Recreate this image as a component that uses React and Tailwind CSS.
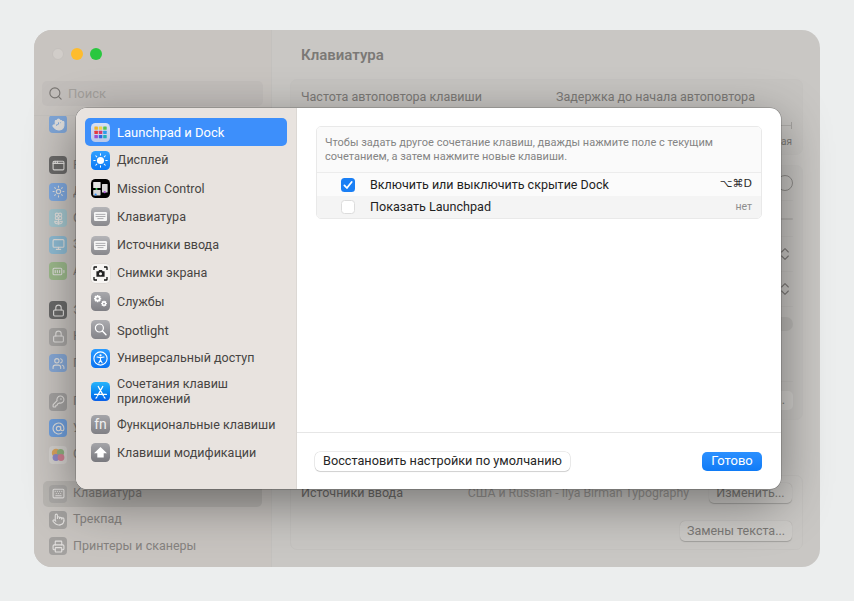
import { Search, ChevronsUpDown, Hand, Lock, Users, KeyRound, Keyboard, Printer, AppWindow, Sun, Flower2, Monitor, BatteryFull, AtSign, Pointer } from "lucide-react";

const font = { fontFamily: "Roboto, 'Noto Sans', sans-serif" };

function Tile({ className = "", children }) {
  return (
    <div className={`w-[19px] h-[19px] rounded-[4.5px] shrink-0 flex items-center justify-center overflow-hidden ${className}`}>
      <svg viewBox="0 0 19 19" className="w-[19px] h-[19px]">{children}</svg>
    </div>
  );
}

const IconGrid = () => {
  const cols = ["#f0b429", "#f5d24a", "#58c44f", "#e5393b", "#d63c6c", "#2f9be8", "#9a4fd0", "#3167e0", "#21b0b8"];
  return (
    <Tile className="bg-gradient-to-b from-[#d9e1f2] to-[#b9c8ea]">
      {cols.map((c, i) => (
        <rect key={i} x={3.4 + (i % 3) * 4.4} y={3.6 + Math.floor(i / 3) * 4.2} width="3.5" height="3.2" rx="0.5" fill={c} />
      ))}
    </Tile>
  );
};

const sunRays = [0, 45, 90, 135, 180, 225, 270, 315];

const IconSun = () => (
  <Tile className="bg-gradient-to-b from-[#30a0ff] to-[#0a78f5]">
    <circle cx="9.5" cy="9.5" r="3.6" fill="#fff" />
    {sunRays.map((a) => (
      <rect key={a} x="9" y="2.4" width="1" height="2.2" fill="#fff" transform={`rotate(${a} 9.5 9.5)`} />
    ))}
  </Tile>
);

const IconMission = () => (
  <Tile className="bg-black">
    <rect x="2.2" y="3" width="7.4" height="6" rx="0.6" fill="#e4e4e4" />
    <rect x="2.2" y="11" width="7.4" height="5.4" rx="0.6" fill="#d5d5d5" />
    <rect x="11" y="5" width="5.6" height="8.6" rx="0.6" fill="#d8d8d8" />
    <circle cx="5.5" cy="10" r="1.1" fill="#3ecb58" />
    <circle cx="4.6" cy="15.6" r="1.1" fill="#2e8cf5" />
    <circle cx="13.7" cy="13.2" r="1.1" fill="#b05ad8" />
  </Tile>
);

const IconKeys = () => (
  <Tile className="bg-gradient-to-b from-[#b5b5b8] to-[#88888c]">
    <rect x="3" y="5" width="13" height="9" rx="1.2" fill="#f4f4f4" />
    <path d="M4.6 7.4h9.8M4.6 9.5h9.8M6.5 11.6h6" stroke="#a5a5a8" strokeWidth="0.9" />
  </Tile>
);

const IconShot = () => (
  <Tile className="bg-[#f7f5f3] shadow-[0_0_0_0.5px_#d8d4d0]">
    <path d="M3 6V3.6a.6.6 0 0 1 .6-.6H6M13 3h2.4a.6.6 0 0 1 .6.6V6M16 13v2.4a.6.6 0 0 1-.6.6H13M6 16H3.6a.6.6 0 0 1-.6-.6V13" fill="none" stroke="#111" strokeWidth="1.3" />
    <path d="M5.4 7.2h1.9l.8-1.1h2.8l.8 1.1h1.9v5.6H5.4z" fill="#222" />
    <circle cx="9.5" cy="9.8" r="1.5" fill="#f7f5f3" />
  </Tile>
);

const Gear = ({ x, y, r }) => (
  <g>
    {[0, 45, 90, 135].map((a) => (
      <rect key={a} x={x - r * 0.28} y={y - r * 1.25} width={r * 0.56} height={r * 2.5} fill="#fff" transform={`rotate(${a} ${x} ${y})`} />
    ))}
    <circle cx={x} cy={y} r={r} fill="#fff" />
    <circle cx={x} cy={y} r={r * 0.42} fill="#98989c" />
  </g>
);

const IconGears = () => (
  <Tile className="bg-gradient-to-b from-[#a8a8ac] to-[#7f7f84]">
    <Gear x={6.6} y={6.6} r={2.9} />
    <Gear x={13} y={11.6} r={2.3} />
  </Tile>
);

const IconSpot = () => (
  <Tile className="bg-gradient-to-b from-[#acacb0] to-[#838388]">
    <circle cx="8.4" cy="8" r="4" fill="none" stroke="#fff" strokeWidth="1.2" />
    <path d="M11.4 11l3.6 3.8" stroke="#fff" strokeWidth="1.4" strokeLinecap="round" />
  </Tile>
);

const IconAccess = () => (
  <Tile className="bg-gradient-to-b from-[#2a9bff] to-[#0a72f0]">
    <circle cx="9.5" cy="9.5" r="6.6" fill="none" stroke="#fff" strokeWidth="1.1" />
    <circle cx="9.5" cy="6.3" r="1.1" fill="#fff" />
    <path d="M6 8l3.5.6L13 8M9.5 8.6v2.4M9.5 11l-1.7 3M9.5 11l1.7 3" fill="none" stroke="#fff" strokeWidth="1.1" strokeLinecap="round" />
  </Tile>
);

const IconStore = () => (
  <Tile className="bg-gradient-to-b from-[#28b4fb] to-[#0b5fe8]">
    <path d="M7.2 4.4l5.2 9.2M11.8 4.4l-5.2 9.2M3.6 12.4h11.8M13 14.8l1 1.4M6 14.8l-1 1.4" fill="none" stroke="#fff" strokeWidth="1.2" strokeLinecap="round" />
  </Tile>
);

const IconFn = () => (
  <div className="w-[19px] h-[19px] rounded-[4.5px] shrink-0 flex items-center justify-center bg-gradient-to-b from-[#a5a5a9] to-[#808085] text-[#efefef] text-[14px] leading-none pb-px">
    fn
  </div>
);

const IconArrow = () => (
  <Tile className="bg-gradient-to-b from-[#a5a5a9] to-[#79797e]">
    <path d="M9.5 4L16 10.2h-3.3v4.2H6.3v-4.2H3z" fill="#fff" />
  </Tile>
);

const menu = [
  { label: "Дисплей", icon: <IconSun />, size: "text-[12.5px]" },
  { label: "Mission Control", icon: <IconMission />, size: "text-[12.5px]" },
  { label: "Клавиатура", icon: <IconKeys />, size: "text-[12.5px]" },
  { label: "Источники ввода", icon: <IconKeys />, size: "text-[12.5px]" },
  { label: "Снимки экрана", icon: <IconShot />, size: "text-[12.5px]" },
  { label: "Службы", icon: <IconGears />, size: "text-[12.5px]" },
  { label: "Spotlight", icon: <IconSpot />, size: "text-[13px]" },
  { label: "Универсальный доступ", icon: <IconAccess />, size: "text-[12.5px]" },
];

function BgIcon({ color, icon: Icon, fill = "none" }) {
  return (
    <div className={`w-[18px] h-[18px] rounded-[4px] shrink-0 flex items-center justify-center text-[#e2e0de] ${color}`}>
      {Icon && <Icon size={13} strokeWidth={2} fill={fill} />}
    </div>
  );
}

// only the first letter peeks out from under the sheet
function BgRow({ color, icon, letter, fill }) {
  return (
    <div className="h-[26.5px] pl-[15px] flex items-center gap-[6px] text-[12.5px] text-[#85827f]">
      <BgIcon color={color} icon={icon} fill={fill} />
      <span className="w-[3px] overflow-hidden">{letter}</span>
    </div>
  );
}

function GameCenterIcon() {
  return (
    <div className="w-[18px] h-[18px] rounded-[4px] shrink-0 bg-[#d3d0cd]">
      <svg viewBox="0 0 18 18" className="w-[18px] h-[18px]">
        <circle cx="7" cy="7" r="4.2" fill="#d9a35c" />
        <circle cx="11.5" cy="6.5" r="3.6" fill="#8fb07f" />
        <circle cx="7" cy="11.5" r="3.4" fill="#8d88c6" />
        <circle cx="12" cy="11.5" r="3.4" fill="#cf7f92" />
      </svg>
    </div>
  );
}

function Background() {
  return (
    <div className="w-[786px] h-[537px] rounded-[18px] bg-[#c9c7c4] flex overflow-hidden">
      <div className="w-[238px] shrink-0 bg-[#c8c4c0] border-r border-[#c3c1be] flex flex-col">
        <div className="flex gap-[7px] pl-[18px] pt-[18px] pb-[21px]">
          <div className="w-[12px] h-[12px] rounded-full bg-[#d1cdc9] border border-[#c4c0bc]" />
          <div className="w-[12px] h-[12px] rounded-full bg-[#febc2e]" />
          <div className="w-[12px] h-[12px] rounded-full bg-[#29c73f]" />
        </div>
        <div className="mx-[8px] h-[25px] rounded-[5px] bg-[#c2bebb] flex items-center gap-[5px] pl-[6px] text-[13px] text-[#a3a09c]">
          <Search size={15} strokeWidth={1.8} className="text-[#787572]" />
          <span>Поиск</span>
        </div>
        <div className="flex-1 overflow-hidden mt-[9px] border-t border-[#c3c0bc]">
          <div className="h-[38px] pl-[15px] -mb-px">
            <div className="-mt-[1px]"><BgIcon color="bg-[#7fa6d8]" icon={Hand} fill="currentColor" /></div>
          </div>
          <BgRow color="bg-[#6b6a69]" icon={AppWindow} letter="Р" />
          <BgRow color="bg-[#7fa9e0]" icon={Sun} letter="Д" />
          <BgRow color="bg-[#a5c7cf]" icon={Flower2} letter="О" />
          <BgRow color="bg-[#8fbcd4]" icon={Monitor} letter="З" />
          <BgRow color="bg-[#9dba8c]" icon={BatteryFull} letter="А" />
          <div className="h-[12.5px]" />
          <BgRow color="bg-[#6a6a69]" icon={Lock} letter="Э" />
          <BgRow color="bg-[#a8a6a4]" icon={Lock} letter="К" />
          <BgRow color="bg-[#86a8d6]" icon={Users} letter="П" />
          <div className="h-[12px]" />
          <BgRow color="bg-[#a3a1a0]" icon={KeyRound} letter="П" />
          <BgRow color="bg-[#6f9fdc]" icon={AtSign} letter="У" />
          <div className="h-[26.5px] pl-[15px] flex items-center gap-[6px] text-[12.5px] text-[#85827f]">
            <GameCenterIcon />
            <span className="w-[3px] overflow-hidden">G</span>
          </div>
          <div className="h-[12.5px]" />
          <div className="mx-[9px] h-[26px] rounded-[5px] bg-[#b8b5b1] flex items-center gap-[6px] pl-[6px] text-[12.5px] text-[#7e7b78]">
            <BgIcon color="bg-[#a9a7a5]" icon={Keyboard} />
            <span>Клавиатура</span>
          </div>
          <div className="h-[26.5px] pl-[15px] flex items-center gap-[6px] text-[12.5px] text-[#85827f]">
            <BgIcon color="bg-[#a3a19f]" icon={Pointer} />
            <span>Трекпад</span>
          </div>
          <div className="h-[26.5px] pl-[15px] flex items-center gap-[6px] text-[12.5px] text-[#85827f]">
            <BgIcon color="bg-[#a3a19f]" icon={Printer} />
            <span>Принтеры и сканеры</span>
          </div>
        </div>
      </div>
      <div className="flex-1 pl-[18px] pr-[17px] text-[12.5px] text-[#7b7976]">
        <div className="pl-[11px] pt-[14px] text-[15px] font-semibold h-[49px]">Клавиатура</div>
        <div className="h-[76px] rounded-[7px] border border-[#c5c3c0] bg-[#c6c4c1] flex flex-col px-[10px] pt-[8px]">
          <div className="flex">
            <span className="w-[255px]">Частота автоповтора клавиши</span>
            <span>Задержка до начала автоповтора</span>
          </div>
          <div className="mt-[15px] flex justify-end items-center">
            <div className="w-[12px] h-px bg-[#b0aeab]" />
            <div className="w-px h-[7px] bg-[#a5a3a0]" />
          </div>
          <div className="mt-[8px] flex justify-end text-[10px] leading-none">ая</div>
        </div>
        <div className="mt-[10px] h-[255px] rounded-[7px] border border-[#c5c3c0] bg-[#c6c4c1] flex flex-col px-[9px]">
          <div className="h-[35px] flex items-center justify-end border-b border-[#c1bfbc]">
            <div className="w-[16px] h-[16px] rounded-full border border-[#8e8c89]" />
          </div>
          <div className="h-[37px] flex items-center justify-end border-b border-[#c1bfbc]">
            <div className="w-[12px] h-[2px] bg-[#b5b3b0] rounded-full" />
          </div>
          <div className="h-[35px] flex items-center justify-end border-b border-[#c1bfbc]">
            <ChevronsUpDown size={16} strokeWidth={1.6} />
          </div>
          <div className="h-[35px] flex items-center justify-end border-b border-[#c1bfbc]">
            <ChevronsUpDown size={16} strokeWidth={1.6} />
          </div>
          <div className="h-[35px] flex items-center justify-end">
            <div className="w-[30px] h-[14px] rounded-full bg-[#bab8b5]" />
          </div>
          <div className="h-[40px]" />
          <div className="h-[38px] flex items-center justify-end border-t border-[#c1bfbc]">
            <div className="w-[30px] h-[19px] rounded-[5px] bg-[#d0cecb] flex items-center justify-end pr-[8px]">.</div>
          </div>
        </div>
        <div className="mt-[55px] h-[75px] rounded-[7px] border border-[#c4c2bf] flex flex-col px-[10px] pt-[7px]">
          <div className="flex items-center justify-between">
            <span className="text-[#6e6c6a]">Источники ввода</span>
            <div className="flex items-center gap-[20px]">
              <span className="text-[#979592] text-[12.3px]">США и Russian - Ilya Birman Typography</span>
              <div className="w-[83px] h-[20px] rounded-[5px] bg-[#c9c7c4] shadow-[0_0.5px_1px_rgba(0,0,0,0.2)] flex items-center justify-center">Изменить...</div>
            </div>
          </div>
          <div className="mt-[18px] flex justify-end">
            <div className="w-[112px] h-[20px] rounded-[5px] bg-[#cdcbc8] shadow-[0_0.5px_1px_rgba(0,0,0,0.2)] flex items-center justify-center">Замены текста...</div>
          </div>
        </div>
      </div>
    </div>
  );
}

function Modal() {
  return (
    <div className="absolute left-[76px] top-[108px] w-[705px] h-[381px] rounded-[11px] overflow-hidden bg-white flex shadow-[0_0_0_0.5px_rgba(0,0,0,0.3),0_14px_50px_rgba(0,0,0,0.42)]">
      <div className="w-[221px] shrink-0 bg-[#e8e3df] border-r border-[#dcd8d4] pl-[9px] pr-[9px] pt-[10px] text-[12.5px] text-[#474543]">
        <div className="h-[28px] rounded-[5px] bg-[#3d8ffb] text-white text-[13px] flex items-center gap-[7px] pl-[6px]">
          <IconGrid />
          <span className="pt-px">Launchpad и Dock</span>
        </div>
        {menu.map((m) => (
          <div key={m.label} className="h-[28.3px] flex items-center gap-[7px] pl-[6px]">
            {m.icon}
            <span className={`whitespace-nowrap pt-px ${m.size}`}>{m.label}</span>
          </div>
        ))}
        <div className="h-[38px] flex items-center gap-[7px] pl-[6px]">
          <IconStore />
          <span className="leading-[15px]">Сочетания клавиш<br />приложений</span>
        </div>
        <div className="h-[28.3px] flex items-center gap-[7px] pl-[6px]">
          <IconFn />
          <span className="whitespace-nowrap pt-px">Функциональные клавиши</span>
        </div>
        <div className="h-[28.3px] flex items-center gap-[7px] pl-[6px]">
          <IconArrow />
          <span className="whitespace-nowrap pt-px">Клавиши модификации</span>
        </div>
      </div>
      <div className="flex-1 flex flex-col">
        <div className="flex-1 pt-[18px] pl-[19px] pr-[19px]">
          <div className="rounded-[5px] border border-[#e9e9e9] overflow-hidden">
            <div className="h-[46px] bg-[#fafafa] border-b border-[#ececec] pl-[8px] pt-[9px] text-[11px] leading-[13.5px] text-[#848484]">
              Чтобы задать другое сочетание клавиш, дважды нажмите поле с текущим<br />
              сочетанием, а затем нажмите новые клавиши.
            </div>
            <div className="h-[23px] bg-[#fbfbfb] flex items-center pl-[24px] pr-[9px] text-[12.5px] text-[#1f1f1f]">
              <div className="w-[14px] h-[14px] rounded-[3.5px] bg-[#1a7ff5] flex items-center justify-center">
                <svg viewBox="0 0 14 14" className="w-[14px] h-[14px]">
                  <path d="M3.4 7.4l2.5 2.6 4.8-6" fill="none" stroke="#fff" strokeWidth="1.8" strokeLinecap="round" strokeLinejoin="round" />
                </svg>
              </div>
              <span className="ml-[15px] flex-1 pt-px">Включить или выключить скрытие Dock</span>
              <span className="text-[#2d2d2d] text-[11px]" style={{ fontFamily: "'DejaVu Sans', sans-serif" }}>⌥⌘D</span>
            </div>
            <div className="h-[22px] bg-[#f4f4f4] flex items-center pl-[24px] pr-[9px] text-[12.6px] text-[#1f1f1f]">
              <div className="w-[14px] h-[14px] rounded-[3.5px] bg-white border border-[#dcdcdc]" />
              <span className="ml-[15px] flex-1 pt-px">Показать Launchpad</span>
              <span className="text-[10.5px] text-[#8e8e8e]">нет</span>
            </div>
          </div>
        </div>
        <div className="h-[57px] shrink-0 border-t border-[#e6e6e6] flex items-center justify-between pl-[18px] pr-[19px]">
          <div className="w-[255px] h-[19px] rounded-[5px] bg-white shadow-[0_0_0_0.5px_rgba(0,0,0,0.15),0_1px_1px_rgba(0,0,0,0.12)] flex items-center justify-center text-[12.7px] text-[#262626] whitespace-nowrap">
            Восстановить настройки по умолчанию
          </div>
          <div className="w-[60px] h-[19px] rounded-[5px] bg-gradient-to-b from-[#2b90ff] to-[#0f7bf6] flex items-center justify-center text-[13px] text-white">
            Готово
          </div>
        </div>
      </div>
    </div>
  );
}

export default function App() {
  return (
    <div className="relative w-[854px] h-[601px] bg-[#eceeee] pl-[34px] pt-[30px] overflow-hidden" style={font}>
      <Background />
      <Modal />
    </div>
  );
}
